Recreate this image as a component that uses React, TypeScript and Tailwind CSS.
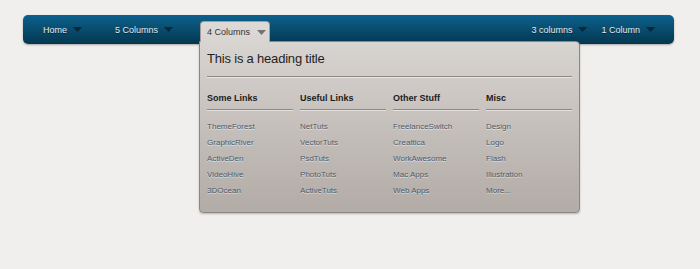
import React from 'react'

const font = { fontFamily: '"Liberation Sans", Arial, sans-serif' }

// Small down-pointing triangle used next to each menu label
function Arrow({ className }: { className?: string }) {
  return (
    <svg width="9" height="5" viewBox="0 0 9 5" className={className}>
      <polygon points="0,0 9,0 4.5,5" fill="currentColor" />
    </svg>
  )
}

const columns = [
  { title: 'Some Links', links: ['ThemeForest', 'GraphicRiver', 'ActiveDen', 'VideoHive', '3DOcean'] },
  { title: 'Useful Links', links: ['NetTuts', 'VectorTuts', 'PsdTuts', 'PhotoTuts', 'ActiveTuts'] },
  { title: 'Other Stuff', links: ['FreelanceSwitch', 'Creattica', 'WorkAwesome', 'Mac Apps', 'Web Apps'] },
  { title: 'Misc', links: ['Design', 'Logo', 'Flash', 'Illustration', 'More...'] },
]

function NavItem({ label }: { label: string }) {
  return (
    <div className="flex items-center">
      <span className="text-[9px] leading-[12px] text-[#e6edf1] [text-shadow:0_1px_0_rgba(0,0,0,0.5)]">{label}</span>
      <Arrow className="ml-[6px] text-[#0a2738]" />
    </div>
  )
}

function MegaPanel() {
  return (
    <div className="absolute left-[-1px] top-[26px] z-10 h-[172px] w-[381px] rounded-b-[4px] rounded-tr-[4px] border border-[#8c8783] bg-gradient-to-b from-[#d8d4d1] to-[#b2aba6] px-[7px] pt-[9px] shadow-[0_1px_2px_rgba(0,0,0,0.25)]">
      <div className="text-[13px] leading-[16px] tracking-[-0.2px] text-[#1f1f1f]">This is a heading title</div>
      <div className="mt-[9px] h-px bg-[#8d8884] shadow-[0_1px_0_rgba(255,255,255,0.5)]" />
      <div className="mt-[15px] grid grid-cols-4 gap-x-[7px]">
        {columns.map((col) => (
          <div key={col.title}>
            <div className="text-[9px] font-bold leading-[12px] text-[#1c1c1c]">{col.title}</div>
            <div className="mt-[5px] h-px bg-[#8d8884] shadow-[0_1px_0_rgba(255,255,255,0.5)]" />
            <ul className="mt-[9px]">
              {col.links.map((l) => (
                <li key={l} className="text-[8px] leading-[16px] text-[#4b5969] [text-shadow:0_1px_0_rgba(255,255,255,0.55)]">
                  {l}
                </li>
              ))}
            </ul>
          </div>
        ))}
      </div>
    </div>
  )
}

export default function App() {
  return (
    <div style={font} className="h-[269px] w-[700px] bg-[#f0efed] pl-[23px] pt-[15px]">
      <nav className="flex h-[29px] w-[651px] justify-between rounded-[5px] bg-gradient-to-b from-[#0d628e] to-[#04374f] shadow-[0_1px_2px_rgba(0,0,0,0.3)]">
        <div className="flex items-center pl-[20px]">
          <NavItem label="Home" />
          <div className="ml-[33px]">
            <NavItem label="5 Columns" />
          </div>
          <div className="relative ml-[27px] self-start">
            <div className="relative z-20 mt-[6px] flex h-[21px] w-[70px] items-center rounded-t-[4px] border border-b-0 border-[#a39e9a] bg-gradient-to-b from-[#dedad7] to-[#d8d4d1] pl-[6px]">
              <span className="text-[9px] leading-[12px] text-[#333]">4 Columns</span>
              <Arrow className="ml-[7px] text-[#77726f]" />
            </div>
            <MegaPanel />
          </div>
        </div>
        <div className="flex items-center pr-[19px]">
          <NavItem label="3 columns" />
          <div className="ml-[14px]">
            <NavItem label="1 Column" />
          </div>
        </div>
      </nav>
    </div>
  )
}
